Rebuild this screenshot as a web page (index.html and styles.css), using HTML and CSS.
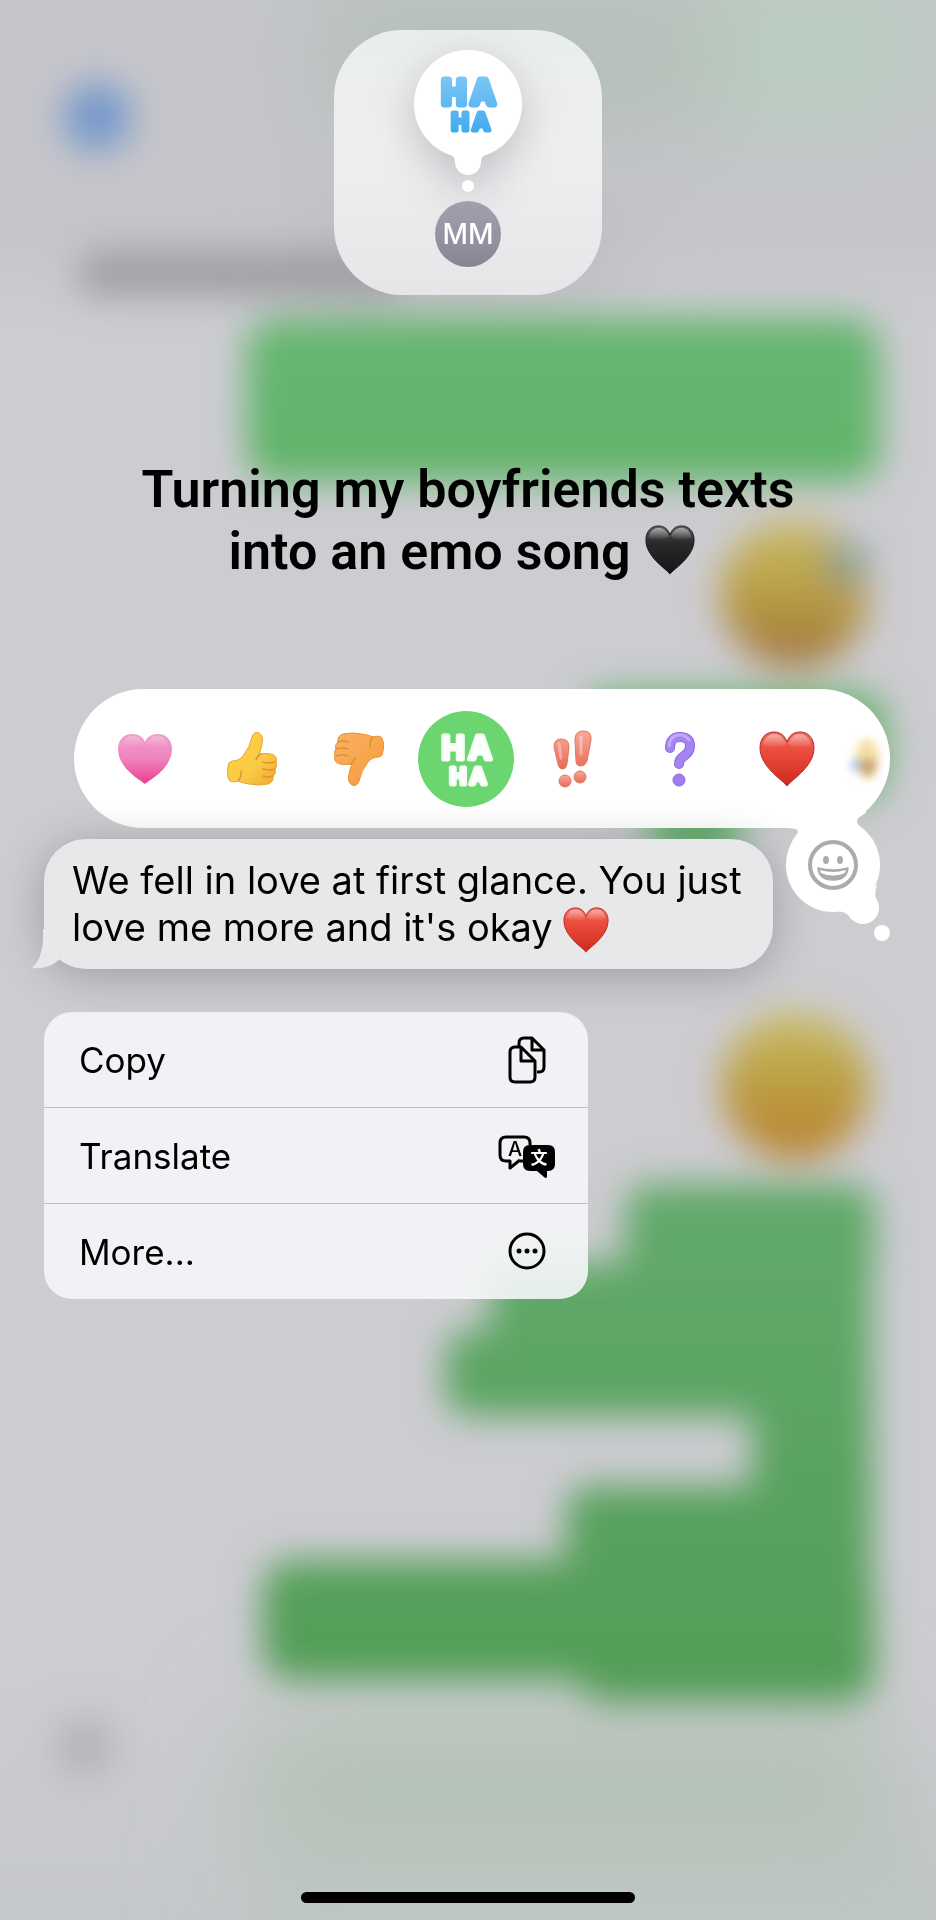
FILE: index.html
```html
<!DOCTYPE html>
<html lang="en">
<head>
<meta charset="utf-8">
<meta name="viewport" content="width=device-width, initial-scale=1">
<title>Message reactions</title>
<link rel="stylesheet" href="styles.css">
</head>
<body>
<svg class="backdrop" viewBox="0 0 936 1920" preserveAspectRatio="xMidYMin slice" aria-hidden="true">
  <defs>
    <filter id="soft" x="-30%" y="-30%" width="160%" height="160%"><feGaussianBlur stdDeviation="18"/></filter>
    <filter id="wide" x="-60%" y="-60%" width="220%" height="220%"><feGaussianBlur stdDeviation="50"/></filter>
    <linearGradient id="base" x1="0" y1="0" x2="0" y2="1">
      <stop offset="0" stop-color="#c5c6ca"/><stop offset=".12" stop-color="#c5c5ca"/><stop offset=".17" stop-color="#cdccd1"/>
      <stop offset=".88" stop-color="#cdccd1"/><stop offset="1" stop-color="#c5c8cb"/>
    </linearGradient>
    <linearGradient id="face" x1="0" y1="0" x2="0" y2="1">
      <stop offset="0" stop-color="#c9bb6a"/><stop offset=".45" stop-color="#bba146"/><stop offset="1" stop-color="#a0743f"/>
    </linearGradient>
    <linearGradient id="face2" x1="0" y1="0" x2="0" y2="1">
      <stop offset="0" stop-color="#cabf6c"/><stop offset=".4" stop-color="#bda346"/><stop offset="1" stop-color="#b98030"/>
    </linearGradient>
    <linearGradient id="sent" gradientUnits="userSpaceOnUse" x1="0" y1="310" x2="0" y2="1700">
      <stop offset="0" stop-color="#67b672"/><stop offset=".12" stop-color="#61b469"/><stop offset=".65" stop-color="#62a96a"/><stop offset="1" stop-color="#529d56"/>
    </linearGradient>
  </defs>
  <rect width="936" height="1920" fill="url(#base)"/>
  <g filter="url(#wide)">
    <ellipse cx="800" cy="50" rx="140" ry="80" fill="#b9cfc0"/>
    <rect x="320" y="-20" width="400" height="150" fill="#b5c0b9"/>
    <rect x="330" y="230" width="270" height="60" fill="#b0afb3"/>
    <rect x="250" y="1720" width="640" height="120" fill="#b2c1b4"/>
    <rect x="240" y="1830" width="720" height="150" fill="#bdc6c3"/>
  </g>
  <g filter="url(#soft)">
    <circle cx="97" cy="117" r="34" fill="#7396cb"/>
    <rect x="80" y="252" width="320" height="42" rx="12" fill="#9c9ba0"/>
    <circle cx="85" cy="1747" r="31" fill="#b4b3b9"/>
    <g fill="url(#sent)">
      <rect x="246" y="318" width="634" height="164" rx="30"/>
      <rect x="580" y="692" width="306" height="110" rx="30"/>
      <rect x="650" y="740" width="90" height="115" rx="20"/>
      <rect x="625" y="1184" width="250" height="100" rx="24"/>
      <rect x="490" y="1262" width="382" height="90" rx="24"/>
      <rect x="445" y="1330" width="427" height="86" rx="24"/>
      <rect x="752" y="1390" width="120" height="150" rx="24"/>
      <rect x="566" y="1486" width="306" height="100" rx="24"/>
      <rect x="262" y="1560" width="613" height="120" rx="30"/>
      <rect x="576" y="1600" width="299" height="102" rx="30"/>
    </g>
    <circle cx="794" cy="594" r="74" fill="url(#face)"/>
    <circle cx="846" cy="562" r="22" fill="#839c8c"/>
    <circle cx="795" cy="1086" r="74" fill="url(#face2)"/>
  </g>
</svg>

<svg class="defs" aria-hidden="true">
  <defs>
    <linearGradient id="redFill" x1="0" y1="0" x2="0" y2="1"><stop offset="0" stop-color="#f06a5e"/><stop offset=".35" stop-color="#ea4c3e"/><stop offset="1" stop-color="#cf2a1c"/></linearGradient>
    <linearGradient id="blackFill" x1="0" y1="0" x2="0" y2="1"><stop offset="0" stop-color="#5c5c5e"/><stop offset=".35" stop-color="#29292b"/><stop offset="1" stop-color="#161618"/></linearGradient>
    <linearGradient id="pinkFill" x1="0" y1="0" x2="0" y2="1"><stop offset="0" stop-color="#f0a0cc"/><stop offset=".5" stop-color="#ef82bd"/><stop offset="1" stop-color="#ea3f93"/></linearGradient>
    <linearGradient id="gloss" x1="0" y1="0" x2="0" y2="1"><stop offset="0" stop-color="#fff" stop-opacity=".5"/><stop offset="1" stop-color="#fff" stop-opacity="0"/></linearGradient>
    <linearGradient id="thumbFill" x1="0" y1="0" x2="1" y2="1"><stop offset="0" stop-color="#fbd044"/><stop offset=".6" stop-color="#f9cb45"/><stop offset="1" stop-color="#f0a633"/></linearGradient>
    <linearGradient id="thumbDownFill" x1="1" y1="1" x2="0" y2="0"><stop offset="0" stop-color="#f9b265"/><stop offset="1" stop-color="#f79a3a"/></linearGradient>
    <linearGradient id="bangFill" x1="0" y1="0" x2="0" y2="1"><stop offset="0" stop-color="#f7aa99"/><stop offset="1" stop-color="#ea6a58"/></linearGradient>
    <linearGradient id="hahaFill" x1="0" y1="0" x2="0" y2="1"><stop offset="0" stop-color="#80c8f5"/><stop offset="1" stop-color="#3da9f1"/></linearGradient>
    <symbol id="heart" viewBox="0 0 56 56">
      <path d="M28 55C25 50 1 36 1 17C1 7 7 1 15 1C22 1 26 5 28 11C30 5 34 1 41 1C49 1 55 7 55 17C55 36 31 50 28 55Z"/>
      <path d="M4 14C5 7 10 3 15 3C21 3 25 7 27 13Q16 20 4 14ZM52 14C51 7 46 3 41 3C35 3 31 7 29 13Q40 20 52 14Z" fill="url(#gloss)" stroke="none"/>
    </symbol>
    <symbol id="hand" viewBox="0 0 50 54">
      <path d="M5 29Q12 29 16 24Q23 15 25 5Q27 -1 32 1Q37 4 35 12Q34 18 32 22Q39 21 44 22Q51 24 49 30Q51 34 48 37Q50 41 46 44Q47 50 41 52Q32 54 22 52Q15 51 11 49Q4 51 2 48Q-1 42 1 35Q1 30 5 29Z"/>
      <path d="M48 30Q42 32 36 30M48 37Q42 39 36 37M46 44Q41 46 36 44M34 22Q30 24 29 28M11 49Q15 45 14 39" fill="none" stroke="#d98a25" stroke-width="1.4" stroke-linecap="round" opacity=".8"/>
    </symbol>
  </defs>
</svg>

<main class="screen">
  <section class="preview" aria-label="Your reaction">
    <svg class="thought" viewBox="0 0 108 142" role="img" aria-label="Haha">
      <g fill="#fff">
        <circle cx="54" cy="54" r="54"/>
        <path d="M30 100Q41 105 41 112A13 13 0 0 0 67 112Q67 105 78 100Z"/>
        <circle cx="54" cy="136" r="6"/>
      </g>
      <text class="haha haha-blue"><tspan x="40 69" y="54" font-size="32">HA</tspan><tspan x="46 67" y="80" font-size="23" stroke-width="5">HA</tspan></text>
    </svg>
    <span class="avatar">MM</span>
  </section>

  <h1 class="caption">Turning my boyfriends texts<br>into an emo song <svg class="caption-heart" fill="url(#blackFill)" stroke="#1c1c1e" role="img" aria-label="black heart"><use href="#heart"/></svg></h1>

  <div class="tapback">
    <div class="reactions">
      <button class="reaction" aria-label="Love"><svg viewBox="0 0 56 52" width="56" height="52" fill="url(#pinkFill)">
        <path d="M28 51C25 48 1 36 1 16C1 7 7 1 15 1C22 1 26 4 28 9C30 4 34 1 41 1C49 1 55 7 55 16C55 36 31 48 28 51Z"/>
        <path d="M5 13C6 7 10 3 15 3C21 3 25 6 27 11Q16 18 5 13ZM51 13C50 7 46 3 41 3C35 3 31 6 29 11Q40 18 51 13Z" fill="url(#gloss)" opacity=".5"/></svg></button>
      <button class="reaction" aria-label="Like"><svg width="50" height="54" fill="url(#thumbFill)" stroke="#e9a42c" stroke-width="1"><use href="#hand"/></svg></button>
      <button class="reaction" aria-label="Dislike"><svg class="turned" width="50" height="54" fill="url(#thumbDownFill)" stroke="#ee8e30" stroke-width="1"><use href="#hand"/></svg></button>
      <button class="reaction selected" aria-label="Haha" aria-pressed="true">
        <svg viewBox="0 0 96 96" width="96" height="96"><circle cx="48" cy="48" r="48" fill="#6bd66f"/>
          <text class="haha haha-white"><tspan x="35 62" y="48" font-size="31">HA</tspan><tspan x="40 60" y="73" font-size="22">HA</tspan></text></svg>
      </button>
      <button class="reaction" aria-label="Emphasize">
        <svg viewBox="0 0 40 58" width="40" height="58" fill="url(#bangFill)" stroke="#e67361" stroke-width="1">
          <path d="M1 17Q1 9 8 9Q16 9 16 17L14 34Q13 39 10 39Q6 39 5 34ZM22 10Q22 1 30 1Q39 1 38 10L34 31Q32 36 28 36Q23 36 23 31Z"/>
          <circle cx="12" cy="51" r="6"/><circle cx="27" cy="47" r="6"/>
          <path d="M6 14L8 28M28 7V24" stroke="#fff" stroke-width="3" stroke-linecap="round" opacity=".35"/></svg>
      </button>
      <button class="reaction" aria-label="Question">
        <svg viewBox="0 0 32 56" width="32" height="56">
          <path d="M6 17Q6 6 16 6Q26 6 26 15Q26 21 20 25Q15 28 15 33" fill="none" stroke="#8a66e6" stroke-width="10" stroke-linecap="round"/>
          <path d="M6 17Q6 6 16 6Q26 6 26 15Q26 21 20 25Q15 28 15 33" fill="none" stroke="#a583f1" stroke-width="8" stroke-linecap="round"/>
          <path d="M5 15Q6 4 16 4Q22 4 25 9" fill="none" stroke="#cdb9f8" stroke-width="3" stroke-linecap="round" opacity=".7"/>
          <circle cx="15" cy="49" r="6" fill="#9f7df0" stroke="#8a66e6"/></svg>
      </button>
      <button class="reaction" aria-label="Red heart"><svg width="56" height="56" fill="url(#redFill)" stroke="#bb2a22"><use href="#heart"/></svg></button>
      <button class="reaction fading" aria-label="Laughing with tears">
        <svg viewBox="0 0 32 48" width="32" height="48"><ellipse cx="17" cy="24" rx="12" ry="20" fill="#f2dc9c"/><path d="M7 26Q17 22 27 26Q26 40 18 41Q9 40 7 26Z" fill="#c99d6c"/><circle cx="5" cy="30" r="6" fill="#a8cbee"/></svg>
      </button>
    </div>
    <button class="picker" aria-label="More emoji">
      <svg viewBox="0 0 112 134">
        <g fill="#fff">
          <circle cx="55" cy="56" r="47"/>
          <path d="M10 0L8 19Q20 19 20 22Q20 25 14 32L96 32Q80 17 79 13Q78 9 88 4V0Z"/>
          <circle cx="85" cy="99" r="16"/>
          <path d="M58 102Q69 102 73 110L100 94Q95 86 99 76Z"/>
          <circle cx="104" cy="124" r="8"/>
        </g>
        <circle cx="55" cy="56" r="23" fill="none" stroke="#ababab" stroke-width="4"/>
        <ellipse cx="48" cy="51" rx="3" ry="4" fill="#ababab"/><ellipse cx="62" cy="51" rx="3" ry="4" fill="#ababab"/>
        <path d="M40 59Q55 63 70 59Q69 71 55 71Q41 71 40 59Z" fill="#ababab" stroke="#ababab" stroke-width="1.5" stroke-linejoin="round"/>
        <path d="M42 61Q55 65 68 61L67 64Q55 69 43 64Z" fill="#fff"/>
      </svg>
    </button>
  </div>

  <article class="message">
    <svg class="message-tail" viewBox="0 0 32 40" aria-hidden="true"><path d="M11 0V12Q10 30 0 39Q15 41 27 31L32 0Z" fill="#e8e8eb"/></svg>
    <p>We fell in love at first glance. You just love me more and it's okay <svg class="message-heart" fill="url(#redFill)" stroke="#bb2a22" role="img" aria-label="red heart"><use href="#heart"/></svg></p>
  </article>

  <div class="menu" role="menu">
    <button role="menuitem">Copy
      <svg class="icon" viewBox="0 0 58 58" fill="none" stroke="#000" stroke-width="3" stroke-linejoin="round">
        <path d="M21 15V12Q21 7 26 7H34L46 19V36Q46 41 41 41H39M34 7V19H46"/>
        <path d="M17 16H23L37 30V46Q37 51 32 51H17Q12 51 12 46V21Q12 16 17 16ZM23 16V30H37"/>
      </svg>
    </button>
    <button role="menuitem">Translate
      <svg class="icon" viewBox="0 0 58 58">
        <path d="M22 33L12 41V34H8Q2 34 2 28V16Q2 10 8 10H26Q32 10 32 16V18M22 34H26" fill="none" stroke="#000" stroke-width="3" stroke-linejoin="round"/>
        <path d="M33 18H50Q57 18 57 25V37Q57 44 50 44H49V50Q48 52 46 50L39 44H32Q25 44 25 37V25Q25 18 32 18Z"/>
        <text class="glyph-a" x="17" y="29">A</text>
        <text class="glyph-wen" x="41" y="37">文</text>
      </svg>
    </button>
    <button role="menuitem">More...
      <svg class="icon" viewBox="0 0 58 58">
        <circle cx="29" cy="28" r="17" fill="none" stroke="#000" stroke-width="3"/>
        <circle cx="21" cy="28" r="2.5"/><circle cx="29" cy="28" r="2.5"/><circle cx="37" cy="28" r="2.5"/>
      </svg>
    </button>
  </div>

  <div class="home-indicator"></div>
</main>
</body>
</html>
```

FILE: styles.css
```css
* { box-sizing: border-box; }

body {
  margin: 0;
  background: #cdccd1;
  color: #000;
  font-family: Inter, "Liberation Sans", sans-serif;
}

button {
  border: 0;
  padding: 0;
  background: none;
  color: inherit;
  font: inherit;
  cursor: pointer;
}

svg { display: block; }

.defs { position: absolute; width: 0; height: 0; }

.backdrop {
  position: fixed;
  inset: 0;
  width: 100%;
  height: 100%;
  z-index: -1;
}

.screen {
  display: flex;
  flex-direction: column;
  min-height: 100vh;
  padding: 30px 44px 17px;
}

.preview {
  display: flex;
  flex-direction: column;
  align-items: center;
  align-self: center;
  gap: 9px;
  width: 268px;
  padding: 20px 0 28px;
  border-radius: 68px;
  background: linear-gradient(#e9eeeb, #efeff0 45%, #e6e6e9);
}

.thought {
  width: 108px;
  overflow: visible;
  filter: drop-shadow(0 14px 22px rgba(60, 40, 60, .25));
}

.haha {
  font-family: Inter, sans-serif;
  font-weight: 600;
  text-anchor: middle;
  stroke-linejoin: round;
  paint-order: stroke;
}

.haha-blue { fill: url(#hahaFill); stroke: url(#hahaFill); stroke-width: 7; }
.haha-white { fill: #fff; stroke: #f4fcf4; stroke-width: 5; }

.avatar {
  display: grid;
  place-items: center;
  width: 66px;
  height: 66px;
  border-radius: 50%;
  background: linear-gradient(#a5a5b3, #858592);
  color: #fff;
  font-size: 28px;
  font-weight: 500;
}

.caption {
  margin: 164px 0 0;
  font-family: Roboto, Inter, sans-serif;
  font-size: 52px;
  font-weight: 600;
  line-height: 62px;
  text-align: center;
}

.caption-heart {
  display: inline-block;
  width: 50px;
  height: 50px;
  margin: 0 12px 0 2px;
  vertical-align: -6px;
}

.tapback {
  position: relative;
  margin: 106px 2px 0 30px;
}

.reactions {
  display: flex;
  align-items: center;
  height: 139px;
  padding-left: 17px;
  border-radius: 70px;
  background: #fff;
  overflow: hidden;
}

.reaction {
  display: grid;
  flex: 0 0 107px;
  place-items: center;
  height: 100%;
}

.turned { transform: rotate(180deg); }

.fading {
  justify-items: start;
  padding-left: 10px;
  filter: blur(4px);
  opacity: .9;
}

.picker {
  position: absolute;
  top: 120px;
  right: 0;
  width: 112px;
  z-index: 1;
}

.message {
  position: relative;
  align-self: flex-start;
  max-width: 729px;
  margin: 11px 0 0;
  padding: 18px 28px;
  border-radius: 42px;
  background: #e8e8eb;
  box-shadow: 0 6px 44px rgba(0, 0, 0, .24);
}

.message p {
  margin: 0;
  font-size: 38px;
  line-height: 47px;
}

.message-tail {
  position: absolute;
  left: -12px;
  bottom: 0;
  width: 32px;
}

.message-heart {
  display: inline-block;
  width: 46px;
  height: 46px;
  margin: -6px 0;
  vertical-align: -6px;
}

.menu {
  width: 544px;
  max-width: 100%;
  margin-top: 43px;
  border-radius: 28px;
  background: rgba(245, 246, 248, .9);
  overflow: hidden;
}

.menu button {
  display: flex;
  align-items: center;
  justify-content: space-between;
  width: 100%;
  height: 95px;
  padding: 0 32px 0 35px;
  font-size: 35px;
}

.menu button + button {
  height: 96px;
  border-top: 1px solid #bcbcc1;
}

.icon { width: 58px; height: 58px; }

.glyph-a {
  font: 500 20px Inter, sans-serif;
  text-anchor: middle;
}

.glyph-wen {
  fill: #fff;
  font: 700 17px "Noto Sans CJK SC", sans-serif;
  text-anchor: middle;
}

.home-indicator {
  align-self: center;
  width: 36%;
  min-width: 334px;
  height: 11px;
  margin-top: auto;
  border-radius: 6px;
  background: #000;
}
```
